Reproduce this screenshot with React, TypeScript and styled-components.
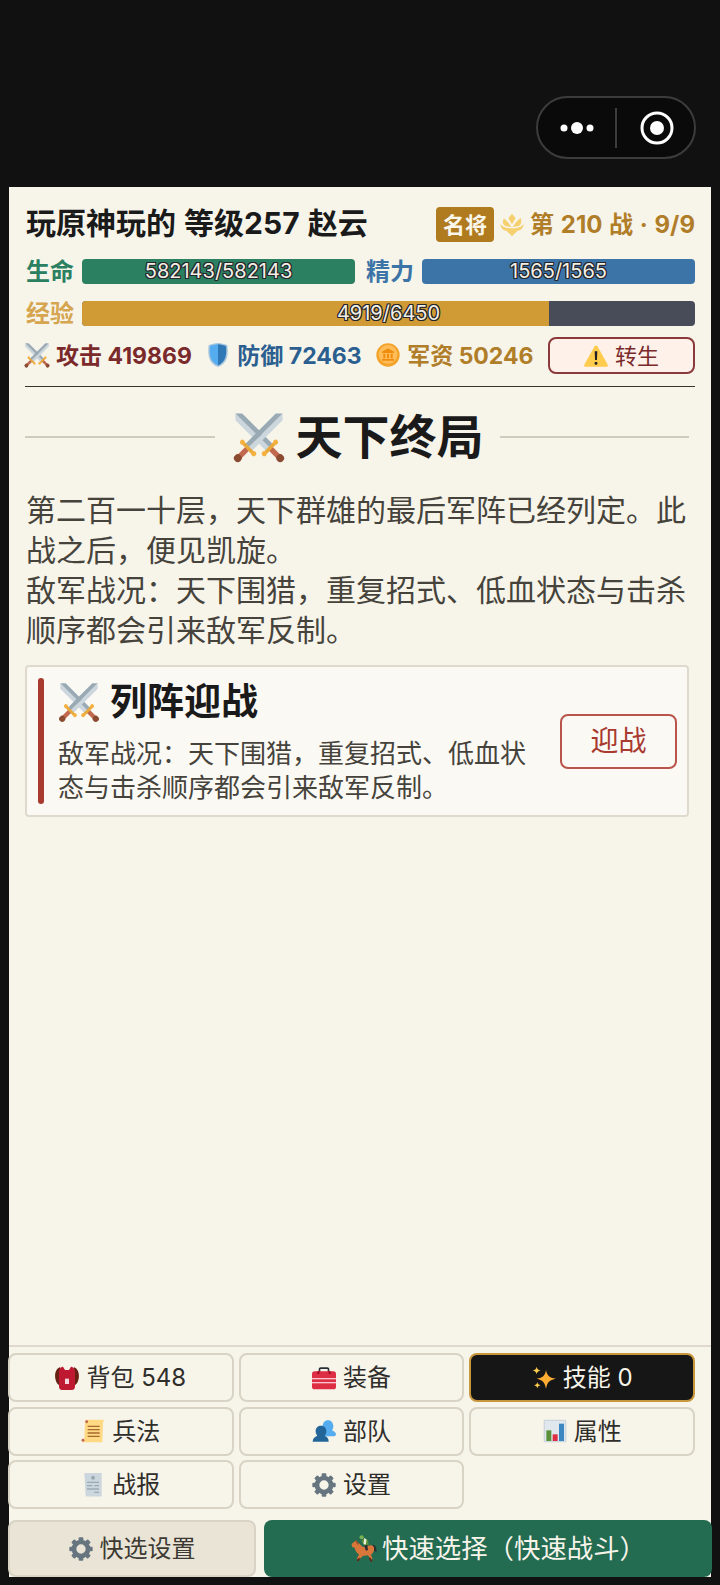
import styled, { createGlobalStyle } from 'styled-components';

const GlobalStyle = createGlobalStyle`
  html, body {
    margin: 0;
    padding: 0;
    background: #111111;
  }
  * {
    box-sizing: border-box;
  }
  body {
    font-family: Inter, "Noto Sans CJK SC", sans-serif;
    color: #1a1a1a;
  }
`;

const Swords = ({ size }: { size: number }) => {
  const sword = (
    <g transform="rotate(-45 18 18)">
      <polygon points="18,-7 14.4,-3.4 14.4,29 18,29" fill="#ccd6dd" />
      <polygon points="18,-7 21.6,-3.4 21.6,29 18,29" fill="#99aab5" />
      <rect x="16" y="29" width="4" height="10" fill="#c1694f" />
      <rect x="12" y="28.4" width="12" height="2.6" rx="1.3" fill="#e8a93a" />
      <circle cx="12" cy="29.6" r="1.9" fill="#f4b13f" />
      <circle cx="24" cy="29.6" r="1.9" fill="#f4b13f" />
      <circle cx="18" cy="40.5" r="2.9" fill="#8a4b30" />
    </g>
  );
  return (
    <svg width={size} height={size} viewBox="0 0 36 36" style={{ overflow: 'visible' }}>
      {sword}
      <g transform="matrix(-1 0 0 1 36 0)">{sword}</g>
    </svg>
  );
};

const ShieldIcon = () => (
  <svg width="24" height="24" viewBox="0 0 36 36">
    <path d="M32 3C25 .5 18 0 18 0S11 .5 4 3C2 18 4 31 18 36c14-5 16-18 14-33z" fill="#a9c6de" />
    <path d="M18 2C13 2.5 9 3.5 6 4.6 4.6 17 6 28.6 18 33.6z" fill="#55acee" />
    <path d="M18 2c5 .5 9 1.500 12 2.600C31.400 17 30 28.600 18 33.600z" fill="#2f77b5" />
  </svg>
);

const CoinIcon = () => (
  <svg width="24" height="24" viewBox="0 0 36 36">
    <circle cx="18" cy="18" r="17.500" fill="#f4a32a" />
    <circle cx="18" cy="17" r="14" fill="#ffbd5a" />
    <path d="M18 8l9 5v2H9v-2zM11 16h3v7h-3zM16.500 16h3v7h-3zM22 16h3v7h-3zM9 24h18v2.500H9z" fill="#f08c0e" />
  </svg>
);

const WarnIcon = () => (
  <svg width="24" height="24" viewBox="0 0 36 36">
    <path d="M2.600 34c-2 0-3-1.500-2-3.200L15.800 3.500c1-1.800 3.400-1.800 4.400 0l15.200 27.300c1 1.700 0 3.200-2 3.200z" fill="#ffcc4d" />
    <path d="M16 11h4l-.6 13h-2.800zM18 26.500a2.300 2.300 0 110 4.600 2.300 2.300 0 010-4.600z" fill="#231f20" />
  </svg>
);

const EmblemIcon = () => (
  <svg width="24" height="24" viewBox="0 0 36 36" fill="#f6d06f">
    <path d="M18 1l5.500 7L18 17l-5.500-9z" />
    <path d="M6 8l7 7 4 6-8-1C4 18 3 13 6 8zM30 8l-7 7-4 6 8-1c5-2 6-7 4-12z" />
    <path d="M1 16c2 5 9 7 17 7s15-2 17-7c1 6-3 10-9 11l-8 8-8-8C4 26 0 22 1 16z" />
  </svg>
);

const BackpackIcon = () => (
  <svg width="24" height="24" viewBox="0 0 36 36">
    <path d="M8 2C2 3-1 11 .5 19c1 5 3 9 6.500 10zM28 2c6 1 9 9 7.500 17-1 5-3 9-6.500 10z" fill="#662113" />
    <path d="M6 8c0-4 4-7 6-7l3 5h6l3-5c2 0 6 3 6 7v23c0 3-2 5-5 5H11c-3 0-5-2-5-5z" fill="#be1931" />
    <rect x="15" y="19" width="6" height="8" fill="#f4d7dc" />
  </svg>
);

const ToolboxIcon = () => (
  <svg width="24" height="24" viewBox="0 0 36 36">
    <path d="M10 10V5c0-2 1.500-3 3-3h10c1.500 0 3 1 3 3v5h-2.500V5c0-.3-.2-.5-.5-.5H13c-.3 0-.5.2-.5.5v5z" fill="#292f33" />
    <rect x="0" y="8" width="36" height="27" rx="4" fill="#dd2e44" />
    <rect x="0" y="18" width="36" height="2" fill="#f7c6cc" />
    <rect x="0" y="24" width="36" height="2" fill="#f7c6cc" />
    <rect x="8" y="8" width="3" height="4" fill="#a0041e" />
    <rect x="25" y="8" width="3" height="4" fill="#a0041e" />
  </svg>
);

const SparkleIcon = () => (
  <svg width="24" height="24" viewBox="0 0 36 36" fill="#ffac33">
    <path d="M21 6c1.500 8 4.500 11.500 15 13-10 2-13 5-15 15-2-10-5-13-14-15 9.500-1.500 13-5 14-13z" />
    <path d="M7 1c.7 3.500 2 5 6 5.700-4 .9-5.200 2.200-6 5.800-.8-3.600-2.200-4.900-6-5.800C5 6 6.300 4.500 7 1zM8 24c.6 3 1.700 4.200 5 4.800-3.300.8-4.400 1.900-5 5-.6-3.100-1.700-4.200-5-5 3.300-.6 4.400-1.800 5-4.800z" fill="#ffcc4d" />
  </svg>
);

const ScrollIcon = () => (
  <svg width="24" height="24" viewBox="0 0 36 36">
    <path d="M9 1h27c-2 1-3 3-3 5l-1 29H1c2-1 4-3 4-5l1-26c0-2 1-3 3-3z" fill="#ffd983" />
    <circle cx="8.500" cy="4" r="2.200" fill="#c1694f" />
    <circle cx="3" cy="32" r="2.200" fill="#c1694f" />
    <path d="M10 10h18v2H10zM10 15h18v2H10zM10 20h18v2H10zM10 25h18v2H10z" fill="#a6692e" />
  </svg>
);

const BustsIcon = () => (
  <svg width="24" height="24" viewBox="0 0 36 36">
    <path d="M14 24c1-5 2-6 4-7-1.500-2-2-4-2-6 0-5 3-9 8-9s8 4 8 9c0 2-.5 4-2 6 3 1.500 6 3 6 6 0 1-1 3-3 3H18z" fill="#55acee" />
    <path d="M1 34c0-5 3-7 7-9-1.500-2-2.500-4-2.500-7 0-5 3.500-8 8-8s8 3 8 8c0 3-1 5-2.500 7 4 2 6 4 6 9z" fill="#226699" />
  </svg>
);

const ChartIcon = () => (
  <svg width="24" height="24" viewBox="0 0 36 36">
    <rect x="1" y="1" width="34" height="34" rx="2" fill="#ccd6dd" />
    <rect x="3" y="3" width="30" height="30" fill="#e1e8ed" />
    <rect x="5" y="17" width="7.500" height="16" fill="#5c913b" />
    <rect x="14.500" y="23" width="7.500" height="10" fill="#dd2e44" />
    <rect x="24" y="7" width="7.500" height="26" fill="#3b88c3" />
  </svg>
);

const ReceiptIcon = () => (
  <svg width="24" height="24" viewBox="0 0 36 36">
    <path d="M5 0h26v36l-2-1.500-2 1.500-2-1.500-2 1.500-2-1.500-2 1.500-2-1.500-2 1.500-2-1.500-2 1.500-2-1.500-2 1.500z" fill="#ccd6dd" />
    <circle cx="18" cy="7" r="3" fill="#99aab5" />
    <path d="M9 13h18v2H9zM9 18h8v2H9zM20 18h7v2h-7zM9 23h18v2H9zM20 28h7v2h-7z" fill="#99aab5" />
  </svg>
);

const GearIcon = () => (
  <svg width="24" height="24" viewBox="0 0 36 36">
    <circle cx="18" cy="18" r="10.500" fill="none" stroke="#66757f" strokeWidth="7" />
    {[0, 45, 90, 135, 180, 225, 270, 315].map((angle) => (
      <rect key={angle} x="14.500" y="0.500" width="7" height="8" rx="1.500" fill="#66757f" transform={`rotate(${angle} 18 18)`} />
    ))}
  </svg>
);

const HorseIcon = () => (
  <svg width="27" height="27" viewBox="0 0 36 36">
    <path d="M30 13c4 0 6 4 5 11-1-2-3-4-5-5z" fill="#292f33" />
    <path d="M2 12l5-4 5 3 5 5 9-2c4-1 7 2 6 6-.5 3-2 5-4 6l2 6-2 1-4-6-7 1-5 5-3-1 3-6c-3-2-5-5-6-9l-3-1z" fill="#d9773a" />
    <path d="M7 8l1-2 2 3 2 3-2 1z" fill="#a0522d" />
    <path d="M14 31l-3 4-2-1 2-3zM27 30l3 5-2 1-3-5z" fill="#662113" />
    <path d="M15 8l4-4 5 3 1 6-5 2z" fill="#5c913b" />
    <path d="M19 4l3 2-1 7-3-1z" fill="#e8f0d8" />
    <path d="M19 14l4-1 1 7-3 1z" fill="#292f33" />
    <circle cx="15.500" cy="3" r="2.800" fill="#77b255" />
  </svg>
);

const Page = styled.div`
  display: flex;
  flex-direction: column;
  height: 1585px;
  width: 720px;
  overflow: hidden;
  background: #111111;
`;

const TopBar = styled.header`
  flex: none;
  height: 187px;
  padding: 96px 24px 0 0;
  display: flex;
  justify-content: flex-end;
  align-items: flex-start;
`;

const Capsule = styled.div`
  width: 160px;
  height: 63px;
  border: 2px solid #3c3c3c;
  border-radius: 32px;
  background: #0a0a0a;
  display: flex;
  align-items: center;
  padding-left: 20px;
`;

const CapsuleDivider = styled.div`
  width: 2px;
  height: 40px;
  margin: 0 23px 0 11px;
  background: #3c3c3c;
`;

const Panel = styled.main`
  flex: 1;
  min-height: 0;
  margin: 0 9px 8px;
  background: #f7f4ea;
  display: flex;
  flex-direction: column;
`;

const Header = styled.section`
  flex: none;
  margin: 0 16px 0 16px;
  padding-top: 20px;
  height: 200px;
  border-bottom: 1px solid #3a3428;
  display: flex;
  flex-direction: column;
`;

const NameRow = styled.div`
  height: 35px;
  display: flex;
  align-items: center;
  justify-content: space-between;
`;

const PlayerName = styled.h2`
  margin: 0 0 0 1px;
  padding-bottom: 7px;
  font-size: 30px;
  font-weight: 700;
  word-spacing: 1px;
  color: #1a1a1a;
  white-space: nowrap;
`;

const BattleInfo = styled.div`
  display: flex;
  align-items: center;
  gap: 6px;
`;

const RankBadge = styled.span`
  width: 58px;
  height: 35px;
  padding-bottom: 3px;
  border-radius: 4px;
  background: #b07a1e;
  color: #fbf6ea;
  font-size: 22px;
  font-weight: 700;
  display: flex;
  align-items: center;
  justify-content: center;
`;

const BattleText = styled.span`
  padding-bottom: 5px;
  font-size: 24px;
  font-weight: 700;
  word-spacing: 1px;
  color: #b07d28;
  white-space: nowrap;
`;

const BarRow = styled.div<{ $top: number }>`
  margin-top: ${(p) => p.$top}px;
  height: 25px;
  display: flex;
  align-items: center;
  gap: 8px;
`;

const BarLabel = styled.span<{ $color: string; $left?: number }>`
  flex: none;
  width: 48px;
  margin-left: ${(p) => p.$left ?? 1}px;
  padding-bottom: 4px;
  font-size: 24px;
  font-weight: 700;
  color: ${(p) => p.$color};
  white-space: nowrap;
`;

const BarTrack = styled.div`
  position: relative;
  flex: 1;
  height: 25px;
  border-radius: 4px;
  overflow: hidden;
  background: #484c58;
`;

const BarFill = styled.div<{ $color: string }>`
  height: 100%;
  background: ${(p) => p.$color};
`;

const BarValue = styled.span`
  position: absolute;
  inset: 0;
  padding-bottom: 1px;
  display: flex;
  align-items: center;
  justify-content: center;
  font-size: 20px;
  color: #f2efe6;
  text-shadow: -1px 0 #26262a, 1px 0 #26262a, 0 -1px #26262a, 0 1px #26262a, -1px -1px #26262a, 1px 1px #26262a, 1px -1px #26262a, -1px 1px #26262a;
`;

const StatsRow = styled.div`
  margin-top: 11px;
  height: 37px;
  display: flex;
  align-items: center;
  justify-content: space-between;
`;

const Stat = styled.span<{ $color: string }>`
  display: flex;
  align-items: center;
  gap: 7px;
  padding-bottom: 2px;
  font-size: 23px;
  font-weight: 700;
  color: ${(p) => p.$color};
  white-space: nowrap;
`;

const StatText = styled.span`
  padding-bottom: 2px;
`;

const RebirthButton = styled.button`
  width: 147px;
  height: 37px;
  padding: 0;
  border: 2px solid #8a3a3a;
  border-radius: 8px;
  background: #fdf1ea;
  color: #7a2a2a;
  font: inherit;
  font-size: 22px;
  display: flex;
  align-items: center;
  justify-content: center;
  gap: 7px;
`;

const Content = styled.section`
  flex: 1;
  min-height: 0;
  padding: 0 22px 0 16px;
`;

const TitleRow = styled.div`
  height: 100px;
  margin-bottom: 3px;
  display: flex;
  align-items: center;
  gap: 18px;
`;

const TitleLine = styled.div`
  flex: 1;
  height: 2px;
  background: #cfcbbd;
`;

const Title = styled.h1`
  margin: 0 -2px 0 2px;
  display: flex;
  align-items: center;
  gap: 13px;
  font-size: 47px;
  line-height: 60px;
  font-weight: 700;
`;

const Intro = styled.p`
  margin: 0 0 15px;
  padding-left: 1px;
  font-size: 30px;
  line-height: 40px;
  color: #45433b;
  width: 668px;
`;

const ActionCard = styled.div`
  height: 152px;
  border: 2px solid #dfdacd;
  border-radius: 4px;
  background: #fbf9f4;
  padding: 11px 10px 11px 11px;
  display: flex;
  align-items: center;
  gap: 28px;
`;

const CardAccent = styled.div`
  flex: none;
  align-self: stretch;
  width: 6px;
  border-radius: 3px;
  background: #a83a30;
  margin-right: -14px;
`;

const CardBody = styled.div`
  flex: 1;
  min-width: 0;
`;

const CardTitle = styled.h3`
  margin: 1px 0 11px 2px;
  display: flex;
  align-items: center;
  gap: 12px;
  font-size: 37px;
  line-height: 48px;
  font-weight: 700;
`;

const CardText = styled.p`
  margin: 0;
  font-size: 26px;
  line-height: 34px;
  color: #45433b;
`;

const FightButton = styled.button`
  flex: none;
  width: 117px;
  height: 55px;
  padding: 0 0 4px;
  border: 2px solid #b9554b;
  border-radius: 8px;
  background: #fbf9f4;
  color: #a83a30;
  font: inherit;
  font-size: 28px;
`;

const Menu = styled.nav`
  flex: none;
  margin: 0 16px 0 -1px;
  padding-top: 8px;
  display: grid;
  grid-template-columns: repeat(3, 1fr);
  grid-auto-rows: 49px;
  gap: 4.5px 5px;
  position: relative;
  &::before {
    content: '';
    position: absolute;
    top: 0;
    left: 1px;
    right: -16px;
    height: 2px;
    background: #dfdacd;
  }
`;

const MenuButton = styled.button<{ $active?: boolean }>`
  padding: 0;
  border: 2px solid ${(p) => (p.$active ? '#c8963c' : '#d8d3c5')};
  border-radius: 8px;
  background: ${(p) => (p.$active ? '#161616' : '#f7f4ea')};
  color: ${(p) => (p.$active ? '#f7f4ea' : '#2f2e2a')};
  font: inherit;
  font-size: 24px;
  display: flex;
  align-items: center;
  justify-content: center;
  gap: 7px;
`;

const ButtonLabel = styled.span`
  padding-bottom: 4px;
`;

const QuickRow = styled.div`
  flex: none;
  margin: 11px -1px 0;
  display: grid;
  grid-template-columns: 248px 1fr;
  gap: 8px;
  height: 57px;
`;

const QuickSettings = styled.button`
  padding: 0;
  border: 2px solid #d8d3c5;
  border-radius: 8px;
  background: #e9e4d6;
  color: #3c3a33;
  font: inherit;
  font-size: 24px;
  display: flex;
  align-items: center;
  justify-content: center;
  gap: 7px;
`;

const QuickBattle = styled.button`
  padding: 0 0 0 20px;
  border: none;
  border-radius: 8px;
  background: #236b51;
  color: #f7f4ea;
  font: inherit;
  font-size: 26.4px;
  display: flex;
  align-items: center;
  justify-content: center;
  gap: 5px;
`;

const enemyNote = '敌军战况：天下围猎，重复招式、低血状态与击杀顺序都会引来敌军反制。';

const menuItems = [
  { label: '背包 548', icon: <BackpackIcon /> },
  { label: '装备', icon: <ToolboxIcon /> },
  { label: '技能 0', icon: <SparkleIcon />, active: true },
  { label: '兵法', icon: <ScrollIcon /> },
  { label: '部队', icon: <BustsIcon /> },
  { label: '属性', icon: <ChartIcon /> },
  { label: '战报', icon: <ReceiptIcon /> },
  { label: '设置', icon: <GearIcon /> },
];

export default function App() {
  return (
    <>
      <GlobalStyle />
      <Page>
        <TopBar>
          <Capsule>
            <svg width="46" height="16" viewBox="0 0 46 16" fill="#ffffff">
              <circle cx="6" cy="8" r="3.500" />
              <circle cx="19" cy="8" r="6" />
              <circle cx="32" cy="8" r="3.500" />
            </svg>
            <CapsuleDivider />
            <svg width="34" height="34" viewBox="0 0 34 34">
              <circle cx="17" cy="17" r="15" fill="none" stroke="#ffffff" strokeWidth="3" />
              <circle cx="17" cy="17" r="7" fill="#ffffff" />
            </svg>
          </Capsule>
        </TopBar>
        <Panel>
          <Header>
            <NameRow>
              <PlayerName>玩原神玩的 等级257 赵云</PlayerName>
              <BattleInfo>
                <RankBadge>名将</RankBadge>
                <EmblemIcon />
                <BattleText>第 210 战 · 9/9</BattleText>
              </BattleInfo>
            </NameRow>
            <BarRow $top={17}>
              <BarLabel $color="#2a8060">生命</BarLabel>
              <BarTrack>
                <BarFill $color="#2a8060" style={{ width: '100%' }} />
                <BarValue>582143/582143</BarValue>
              </BarTrack>
              <BarLabel $color="#3d74a8" $left={3}>精力</BarLabel>
              <BarTrack>
                <BarFill $color="#3d74a8" style={{ width: '100%' }} />
                <BarValue>1565/1565</BarValue>
              </BarTrack>
            </BarRow>
            <BarRow $top={17}>
              <BarLabel $color="#d6a550">经验</BarLabel>
              <BarTrack>
                <BarFill $color="#d09a35" style={{ width: `${(4919 / 6450) * 100}%` }} />
                <BarValue>4919/6450</BarValue>
              </BarTrack>
            </BarRow>
            <StatsRow>
              <Stat $color="#7a2a2a"><Swords size={24} /><StatText>攻击 419869</StatText></Stat>
              <Stat $color="#2a5f8f"><ShieldIcon /><StatText>防御 72463</StatText></Stat>
              <Stat $color="#b07d28"><CoinIcon /><StatText>军资 50246</StatText></Stat>
              <RebirthButton><WarnIcon /><ButtonLabel>转生</ButtonLabel></RebirthButton>
            </StatsRow>
          </Header>
          <Content>
            <TitleRow>
              <TitleLine />
              <Title><Swords size={48} />天下终局</Title>
              <TitleLine />
            </TitleRow>
            <Intro>
              第二百一十层，天下群雄的最后军阵已经列定。此战之后，便见凯旋。
              <br />
              {enemyNote}
            </Intro>
            <ActionCard>
              <CardAccent />
              <CardBody>
                <CardTitle><Swords size={38} />列阵迎战</CardTitle>
                <CardText>{enemyNote}</CardText>
              </CardBody>
              <FightButton>迎战</FightButton>
            </ActionCard>
          </Content>
          <Menu>
            {menuItems.map((item) => (
              <MenuButton key={item.label} $active={item.active}>
                {item.icon}
                <ButtonLabel>{item.label}</ButtonLabel>
              </MenuButton>
            ))}
          </Menu>
          <QuickRow>
            <QuickSettings><GearIcon /><ButtonLabel>快选设置</ButtonLabel></QuickSettings>
            <QuickBattle><HorseIcon /><ButtonLabel>快速选择（快速战斗）</ButtonLabel></QuickBattle>
          </QuickRow>
        </Panel>
      </Page>
    </>
  );
}
